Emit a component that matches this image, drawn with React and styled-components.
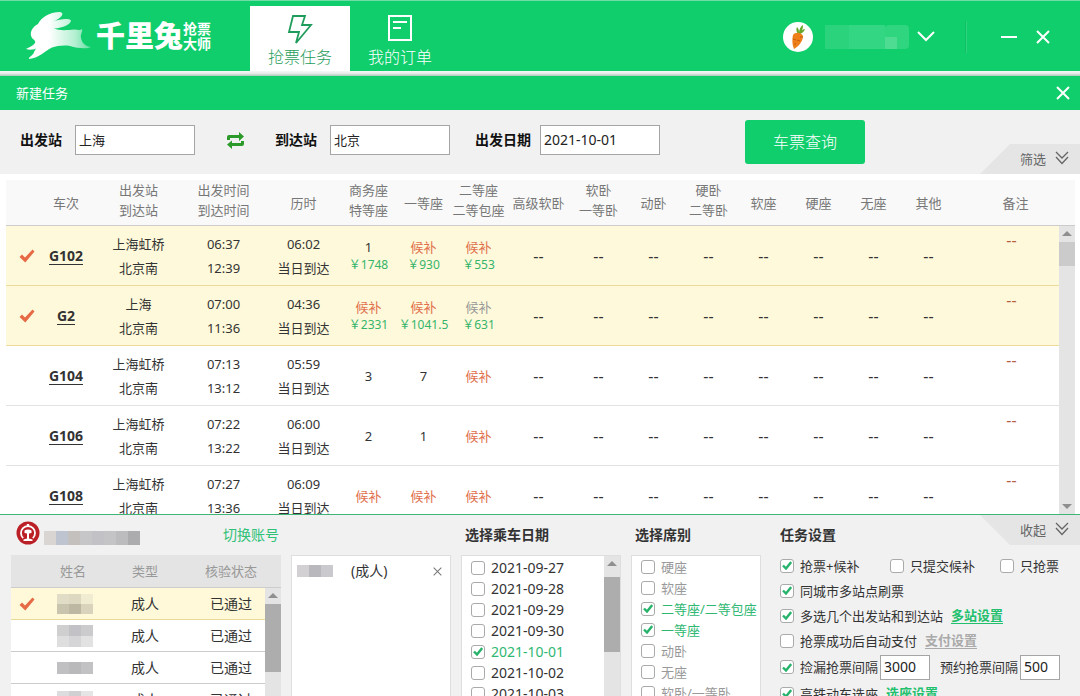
import React from 'react';
import styled, { createGlobalStyle } from 'styled-components';

const GlobalStyle = createGlobalStyle`
  * {
    box-sizing: border-box;
  }

  body {
    margin: 0;
    font-family: 'Noto Sans', 'Noto Sans CJK SC', sans-serif;
    font-size: 13px;
    line-height: 20px;
    color: #333;
    background: #fff;
  }

  button, input {
    font-family: inherit;
    font-size: inherit;
  }
`;

const Page = styled.div`
  height: 100vh;
  display: flex;
  flex-direction: column;
  overflow: hidden;
`;

const IconButton = styled.button`
  display: flex;
  align-items: center;
  justify-content: center;
  padding: 0;
  border: none;
  background: none;
  cursor: pointer;
`;

/* header */

const Header = styled.header`
  display: flex;
  justify-content: space-between;
  height: 71px;
  flex-shrink: 0;
  background: #10ce6c;
  border-top: 1px solid #6fdda5;
`;

const HeaderShadow = styled.div`
  height: 5px;
  flex-shrink: 0;
  background: linear-gradient(to bottom, #f4fbf7 0%, #e6eae8 50%, #a9c9b8 100%);
`;

const HeaderLeft = styled.div`
  display: flex;
`;

const Logo = styled.div`
  display: flex;
  align-items: center;
  width: 250px;
  padding-left: 24px;
  color: #fff;
`;

const LogoName = styled.span`
  margin-left: 4px;
  font-size: 29px;
  line-height: 40px;
  font-weight: 900;
`;

const LogoSub = styled.span`
  width: 28px;
  font-size: 14px;
  line-height: 15px;
  font-weight: 700;
`;

const Tabs = styled.nav`
  display: flex;
  padding-top: 5px;
`;

const Tab = styled.button`
  display: flex;
  flex-direction: column;
  align-items: center;
  width: 100px;
  padding: 7px 0 0;
  border: none;
  font-size: 16px;
  line-height: 24px;
  font-weight: 300;
  color: ${props => (props.$active ? '#1f9c5b' : '#fff')};
  background: ${props => (props.$active ? '#fff' : 'transparent')};
  cursor: pointer;
`;

const UserArea = styled.div`
  display: flex;
  align-items: center;
  padding: 2px 30px 0 0;
`;

const Divider = styled.i`
  width: 2px;
  height: 32px;
  margin: 0 34px 0 26px;
  background: #0fbf63;
  border-right: 1px solid #2ed580;
`;

const CloseButton = styled(IconButton)`
  margin-left: 19px;
`;

const TitleBar = styled.div`
  display: flex;
  align-items: center;
  justify-content: space-between;
  height: 34px;
  flex-shrink: 0;
  padding: 0 10px 0 16px;
  color: #fff;
  background: #10ce6c;
`;

/* search */

const SearchBar = styled.form`
  position: relative;
  display: flex;
  align-items: flex-start;
  height: 64px;
  flex-shrink: 0;
  padding: 10px 20px;
  background: #f1f1f1;
`;

const Field = styled.div`
  display: flex;
  align-items: center;
  margin: 5px 25px 0 0;
`;

const FieldLabel = styled.label`
  min-width: 55px;
  padding-right: 9px;
  font-size: 14px;
  font-weight: 700;
  color: #111;
`;

const TextInput = styled.input`
  width: ${props => props.$width}px;
  height: ${props => props.$height}px;
  padding: 0 3px 2px;
  border: 1px solid #a5a5a5;
  border-radius: 0;
  background: #fff;
  color: #222;
  font-size: ${props => props.$size || 13}px;
`;

const SwapButton = styled(IconButton)`
  height: 30px;
  margin: 5px 30px 0 6px;
`;

const SearchButton = styled.button`
  width: 120px;
  height: 44px;
  margin-left: 60px;
  padding: 0 0 2px;
  border: none;
  border-radius: 3px;
  color: #fff;
  background: #10ce6c;
  font-size: 16px;
  font-weight: 300;
  cursor: pointer;
`;

const CornerTab = styled.button`
  position: absolute;
  right: 0;
  ${props => (props.$top ? 'top: 0;' : 'bottom: 0;')}
  display: flex;
  align-items: center;
  justify-content: flex-end;
  gap: 9px;
  width: 100px;
  height: 30px;
  padding: 0 11px 2px 0;
  border: none;
  color: #666;
  background: #e5e5e5;
  clip-path: ${props => (props.$top
    ? 'polygon(0 0, 100% 0, 100% 100%, 30px 100%)'
    : 'polygon(30px 0, 100% 0, 100% 100%, 0 100%)')};
  cursor: pointer;
`;

/* ticket list */

const TicketArea = styled.section`
  flex: 1;
  min-height: 0;
  display: flex;
  flex-direction: column;
  padding: 6px 5px 0 6px;
`;

const ListBody = styled.div`
  flex: 1;
  min-height: 0;
  display: flex;
  align-items: stretch;
  overflow: hidden;
`;

const ListScroll = styled.div`
  flex: 1;
  min-width: 0;
  overflow: hidden;
`;

const Table = styled.table`
  width: 100%;
  table-layout: fixed;
  border-collapse: separate;
  border-spacing: 0;
  text-align: center;
`;

const HeadCell = styled.th`
  height: 46px;
  padding: 0 0 ${props => (props.$double ? 5 : 0)}px;
  font-weight: 400;
  color: #777;
  white-space: nowrap;
  background: #f9f9f9;
  border-bottom: 1px solid #ccc;
`;

const TicketRow = styled.tr`
  background: ${props => (props.$selected ? '#fef9da' : '#fff')};

  td {
    border-bottom: 1px solid ${props => (props.$selected ? '#ecdc9a' : '#e2e2e2')};
  }
`;

const Cell = styled.td`
  height: 60px;
  padding: 0;
  line-height: 24px;
  white-space: nowrap;
`;

const EmptyCell = styled(Cell)`
  font-size: 16px;
`;

const CheckCell = styled(Cell)`
  padding-left: 12px;
  line-height: 0;
`;

const RemarkCell = styled(EmptyCell)`
  padding: 2px 0 0 8px;
  vertical-align: top;
  color: #b5603f;
`;

const TrainLink = styled.a`
  display: inline-block;
  font-size: 14px;
  line-height: 17px;
  font-weight: 700;
  color: #333;
  text-decoration: none;
  border-bottom: 1px solid #333;
`;

const seatColors = { wait: '#e0704d', off: '#999', num: '#333' };

const Seat = styled.div`
  line-height: 18px;
  color: ${props => seatColors[props.$kind]};
`;

const Price = styled.div`
  font-size: 12px;
  line-height: 18px;
  color: #35b56c;
`;

/* scrollbar */

const Track = styled.div`
  display: flex;
  flex-direction: column;
  align-items: center;
  width: 16px;
  flex-shrink: 0;
  background: #e4e4e4;
`;

const Arrow = styled.i`
  width: 0;
  height: 0;
  margin: ${props => (props.$down ? 'auto 0 5px' : '5px 0 6px')};
  border: 5px solid transparent;
  border-top: ${props => (props.$down ? '5px solid #8f8f8f' : 'none')};
  border-bottom: ${props => (props.$down ? 'none' : '5px solid #8f8f8f')};
`;

const Thumb = styled.div`
  width: 100%;
  height: ${props => props.$height}px;
  margin-top: ${props => props.$offset || 0}px;
  background: ${props => props.$color || '#adadad'};
`;

/* bottom panel */

const Bottom = styled.section`
  position: relative;
  display: flex;
  gap: 10px;
  height: 182px;
  flex-shrink: 0;
  padding-left: 11px;
  overflow: hidden;
  background: #f1f1f1;
  border-top: 1px solid #3fb57a;
`;

const Column = styled.div`
  display: flex;
  flex-direction: column;
  width: ${props => props.$width}px;
  flex-shrink: 0;
`;

const ColumnTitle = styled.h2`
  display: flex;
  align-items: center;
  height: 40px;
  flex-shrink: 0;
  margin: 0;
  padding-left: ${props => props.$indent || 0}px;
  font-size: 14px;
  font-weight: 700;
  color: #333;
`;

const Account = styled.div`
  display: flex;
  align-items: center;
  justify-content: space-between;
  height: 40px;
  flex-shrink: 0;
  padding: 0 2px 0 5px;
`;

const AccountId = styled.div`
  display: flex;
  align-items: flex-end;
  gap: 4px;
  padding-bottom: 4px;
`;

const SwitchLink = styled.a`
  font-size: 14px;
  color: #2fc177;
  text-decoration: none;
`;

const PassengerHead = styled(HeadCell)`
  height: 33px;
  color: #999;
  background: #e4e4e4;
  padding-right: ${props => props.$right || 0}px;
`;

const PassengerCell = styled.td`
  height: 32px;
  padding: 0;
  padding-left: ${props => props.$left || 0}px;
  font-size: 14px;
  line-height: 0;
  white-space: nowrap;
`;

const PassengerRow = styled.tr`
  background: ${props => (props.$selected ? '#fff9d9' : '#fff')};

  td {
    border-bottom: 1px solid ${props => (props.$selected ? '#e9da98' : '#ccc')};
  }
`;

const Panel = styled.div`
  flex: 1;
  display: flex;
  min-height: 0;
  overflow: hidden;
  background: #fff;
  border: 1px solid #dedede;
  border-bottom: none;
`;

const Chosen = styled.div`
  flex: 1;
  display: flex;
  align-items: center;
  height: 30px;
  padding: 0 8px 0 5px;
  font-size: 14px;
`;

const ChosenType = styled.span`
  margin: 0 auto 0 18px;
`;

const OptionList = styled.div`
  flex: 1;
  padding: ${props => props.$top || 0}px 0 0 9px;
`;

const Option = styled.label`
  display: flex;
  align-items: center;
  gap: 6px;
  height: ${props => props.$height}px;
  white-space: nowrap;
  font-size: ${props => props.$size || 13}px;
  color: ${props => props.$color || '#333'};
`;

const CheckBox = styled.input`
  appearance: none;
  width: 14px;
  height: 14px;
  flex-shrink: 0;
  margin: 0;
  border: 1px solid #aaa;
  border-radius: 3px;
  background: #fff center / 10px 9px no-repeat;

  &:checked {
    background-image: url("data:image/svg+xml,%3Csvg xmlns='http://www.w3.org/2000/svg' viewBox='0 0 10 9'%3E%3Cpath d='M1 4.5 4 7.5 9.2 1' fill='none' stroke='%2327b36b' stroke-width='2.4'/%3E%3C/svg%3E");
  }
`;

const Settings = styled.div`
  flex: 1;
  min-width: 0;
  padding-left: 9px;
`;

const ModeRow = styled.div`
  display: grid;
  grid-template-columns: 110px 110px 1fr;
`;

const SettingRow = styled.div`
  display: flex;
  align-items: center;
  gap: 8px;
`;

const IntervalRow = styled(SettingRow)`
  height: 28px;
  gap: 2px;
`;

const IntervalLabel = styled.label`
  margin-left: 8px;
`;

const SettingLink = styled.a`
  font-weight: 700;
  line-height: 16px;
  color: ${props => (props.$muted ? '#aaa' : '#22c06d')};
  text-decoration: none;
  border-bottom: 1px solid;
`;

const SettingBody = styled.div`
  margin-top: -2px;
`;

const Rabbit = () => (
  <svg width="68" height="50" viewBox="24 11 68 50" aria-hidden="true">
    <defs>
      <linearGradient id="fur" x1="0" y1="0" x2="1" y2="0">
        <stop offset="0.35" stopColor="#fff" />
        <stop offset="0.75" stopColor="#b5f0d2" />
        <stop offset="1" stopColor="#5fdf9e" />
      </linearGradient>
    </defs>
    <path
      fill="url(#fur)"
      d="M32 38 C29 33 32 27 38 24 C41 18 49 12 60 12 C65 13 62 18 53 21.500 C60 19 69 18 71 20.500
        C71 24 63 28 54 28.500 C60 31 68 30 74 29.500 C77 29.500 80 31 82 29 C83 32 80 34 81 38
        C82 43 85 46 91 47 C87 49 78 48.500 70 46 C63 45 57 46 52 47.500 C44 51 40 58 29 59
        C28 57 34 55 34 52 L36 48.500 C33 50 29 50 26 49 C29 47 33 46 35 43 C36 41 34 40 32 38 Z"
    />
  </svg>
);

const Carrot = () => (
  <svg width="30" height="30" viewBox="0 0 30 30" aria-hidden="true">
    <circle cx="15" cy="15" r="15" fill="#fff" />
    <path d="M15 12 C13 9 13 7 14 5 C16 7 16 9 16 11 C16 7 18 4 20 3 C20 7 19 9 17 11 C19 8 20 7 22 7 C21 10 19 11 17 12 Z" fill="#63a82b" />
    <path d="M10 13 C12 10 18 10 20 14 C20 19 16 24 11 27 C9 23 9 17 10 13 Z" fill="#ef7f1a" />
    <path d="M10 17 L13 18 M17 19 L14 18 M11 22 L13 22 M20 15 L17 15" stroke="#c65e0c" strokeWidth="1" />
  </svg>
);

const Cross = ({ size = 14, color = '#fff', width = 2 }) => (
  <svg width={size} height={size} viewBox="0 0 14 14" aria-hidden="true">
    <path d="M1 1 L13 13 M13 1 L1 13" stroke={color} strokeWidth={width} />
  </svg>
);

const Tick = () => (
  <svg width="16" height="14" viewBox="0 0 16 14" aria-hidden="true">
    <path d="M0.5 8 L3 5.5 L6 8.5 L13.5 0.5 L15.5 2.5 L6.3 13.5 Z" fill="#e56a45" />
  </svg>
);

const DoubleChevron = () => (
  <svg width="14" height="14" viewBox="0 0 14 14" fill="none" stroke="#666" strokeWidth="1.3" aria-hidden="true">
    <path d="M1 1 L7 7 L13 1 M1 6 L7 12.5 L13 6" />
  </svg>
);

const Railway = () => (
  <svg width="24" height="24" viewBox="0 0 24 24" aria-hidden="true">
    <circle cx="12" cy="12" r="11.5" fill="#bb2026" />
    <path d="M7.2 17.200 A7 7 0 1 1 16.8 17.200" fill="none" stroke="#fff" strokeWidth="1.8" />
    <path d="M12 3 V5.500" stroke="#fff" strokeWidth="2.4" />
    <path d="M8.5 9.5 Q12 7.500 15.5 9.5 V12 L13 12.600 V17.500 L16.5 18.600 V20 H7.5 V18.600 L11 17.500 V12.600 L8.5 12 Z" fill="#fff" />
  </svg>
);

// blurred-out names: rows of flat blocks
const Mosaic = ({ rows, block = 12, height = 18 }) => {
  const rowHeight = height / rows.length;

  return (
    <svg width={rows[0].length * block} height={height} aria-hidden="true">
      {rows.map((colors, y) => colors.map((color, x) => (
        <rect key={`${x}-${y}`} x={x * block} y={y * rowHeight} width={block} height={rowHeight} fill={color} />
      )))}
    </svg>
  );
};

const Scrollbar = ({ height, offset, color, down }) => (
  <Track>
    <Arrow />
    <Thumb $height={height} $offset={offset} $color={color} />
    {down && <Arrow $down />}
  </Track>
);

const ticketHeads = [
  [''], ['车次'], ['出发站', '到达站'], ['出发时间', '到达时间'], ['历时'],
  ['商务座', '特等座'], ['一等座'], ['二等座', '二等包座'], ['高级软卧'],
  ['软卧', '一等卧'], ['动卧'], ['硬卧', '二等卧'], ['软座'], ['硬座'],
  ['无座'], ['其他'], ['备注'],
];

const ticketWidths = [30, 60, 85, 85, 75, 55, 55, 55, 65, 55, 55, 55, 55, 55, 55, 55];

const wait = price => ({ kind: 'wait', text: '候补', price });

const tickets = [
  {
    no: 'G102', selected: true, from: '上海虹桥', to: '北京南', start: '06:37', end: '12:39', cost: '06:02',
    seats: [{ kind: 'num', text: '1', price: '1748' }, wait('930'), wait('553')],
  },
  {
    no: 'G2', selected: true, from: '上海', to: '北京南', start: '07:00', end: '11:36', cost: '04:36',
    seats: [wait('2331'), wait('1041.5'), { kind: 'off', text: '候补', price: '631' }],
  },
  {
    no: 'G104', from: '上海虹桥', to: '北京南', start: '07:13', end: '13:12', cost: '05:59',
    seats: [{ kind: 'num', text: '3' }, { kind: 'num', text: '7' }, wait()],
  },
  {
    no: 'G106', from: '上海虹桥', to: '北京南', start: '07:22', end: '13:22', cost: '06:00',
    seats: [{ kind: 'num', text: '2' }, { kind: 'num', text: '1' }, wait()],
  },
  {
    no: 'G108', from: '上海虹桥', to: '北京南', start: '07:27', end: '13:36', cost: '06:09',
    seats: [wait(), wait(), wait()],
  },
];

const passengers = [
  { selected: true, height: 20, rows: [['#e0dcc6', '#ddd9c0', '#f0ecd2'], ['#c9c4ad', '#bdb8a2', '#d8d3ba']] },
  { height: 22, rows: [['#cfcfcf', '#c2c2c6', '#cbcbce'], ['#dedede', '#d5d5d8', '#e2e2e2']] },
  { height: 12, rows: [['#c0c0c3', '#b9b9bc', '#c2c2c5']] },
  { height: 18, rows: [['#dcdcde', '#d0d0d3', '#e5e5e5'], ['#c9c9cb', '#c2c2c5', '#d0d0d0']] },
];

const accountMosaic = [['#d8d5d3', '#bfc5d0', '#c3c0be', '#c6c6c9', '#c2c2c6', '#c4c4c6', '#bcbcbf', '#acacaf']];

const dates = ['2021-09-27', '2021-09-28', '2021-09-29', '2021-09-30', '2021-10-01', '2021-10-02', '2021-10-03'];

const seatTypes = ['硬座', '软座', '二等座/二等包座', '一等座', '动卧', '无座', '软卧/一等卧'];

const chosenSeats = ['二等座/二等包座', '一等座'];

const Columns = ({ widths }) => (
  <colgroup>
    {widths.map((w, i) => <col key={i} style={{ width: w }} />)}
    <col />
  </colgroup>
);

const Check = ({ label, checked, ...rest }) => (
  <Option {...rest}>
    <CheckBox type="checkbox" defaultChecked={checked} />
    {label}
  </Option>
);

const TicketTable = () => (
  <TicketArea>
    <Table>
      <Columns widths={ticketWidths} />
      <thead>
        <tr>
          {ticketHeads.map((lines, i) => (
            <HeadCell key={i} $double={lines.length > 1}>
              {lines.map(line => <div key={line}>{line}</div>)}
            </HeadCell>
          ))}
        </tr>
      </thead>
    </Table>
    <ListBody>
      <ListScroll>
        <Table>
          <Columns widths={ticketWidths} />
          <tbody>
            {tickets.map(t => (
              <TicketRow key={t.no} $selected={t.selected}>
                <CheckCell>{t.selected && <Tick />}</CheckCell>
                <Cell><TrainLink href="#">{t.no}</TrainLink></Cell>
                <Cell>{t.from}<br />{t.to}</Cell>
                <Cell>{t.start}<br />{t.end}</Cell>
                <Cell>{t.cost}<br />当日到达</Cell>
                {t.seats.map((seat, i) => (
                  <Cell key={i}>
                    <Seat $kind={seat.kind}>{seat.text}</Seat>
                    {seat.price && <Price>￥{seat.price}</Price>}
                  </Cell>
                ))}
                {ticketHeads.slice(8, 16).map(([name]) => <EmptyCell key={name}>--</EmptyCell>)}
                <RemarkCell>--</RemarkCell>
              </TicketRow>
            ))}
          </tbody>
        </Table>
      </ListScroll>
      <Scrollbar height={24} color="#cbcbcb" down />
    </ListBody>
  </TicketArea>
);

const PassengerColumn = () => (
  <Column $width={270}>
    <Account>
      <AccountId>
        <Railway />
        <Mosaic height={14} rows={accountMosaic} />
      </AccountId>
      <SwitchLink href="#">切换账号</SwitchLink>
    </Account>
    <Table>
      <Columns widths={[32, 60, 84]} />
      <thead>
        <tr>
          <PassengerHead />
          <PassengerHead>姓名</PassengerHead>
          <PassengerHead>类型</PassengerHead>
          <PassengerHead $right={6}>核验状态</PassengerHead>
        </tr>
      </thead>
    </Table>
    <ListBody>
      <ListScroll>
        <Table>
          <Columns widths={[32, 60, 84]} />
          <tbody>
            {passengers.map((p, i) => (
              <PassengerRow key={i} $selected={p.selected}>
                <PassengerCell>{p.selected && <Tick />}</PassengerCell>
                <PassengerCell $left={4}><Mosaic rows={p.rows} height={p.height} /></PassengerCell>
                <PassengerCell>成人</PassengerCell>
                <PassengerCell $left={10}>已通过</PassengerCell>
              </PassengerRow>
            ))}
          </tbody>
        </Table>
      </ListScroll>
      <Scrollbar height={68} />
    </ListBody>
  </Column>
);

const TaskSettings = () => (
  <Settings>
    <ColumnTitle>任务设置</ColumnTitle>
    <SettingBody>
      <ModeRow>
        <Check $height={25} label="抢票+候补" checked />
        <Check $height={25} label="只提交候补" />
        <Check $height={25} label="只抢票" />
      </ModeRow>
      <Check $height={25} label="同城市多站点刷票" checked />
      <SettingRow>
        <Check $height={25} label="多选几个出发站和到达站" checked />
        <SettingLink href="#">多站设置</SettingLink>
      </SettingRow>
      <SettingRow>
        <Check $height={25} label="抢票成功后自动支付" />
        <SettingLink href="#" $muted>支付设置</SettingLink>
      </SettingRow>
      <IntervalRow>
        <Check $height={25} label="捡漏抢票间隔" checked />
        <TextInput aria-label="捡漏抢票间隔" $width={50} $height={25} $size={14} defaultValue="3000" />
        <IntervalLabel htmlFor="reserve">预约抢票间隔</IntervalLabel>
        <TextInput id="reserve" $width={40} $height={25} $size={14} defaultValue="500" />
      </IntervalRow>
      <SettingRow>
        <Check $height={25} label="高铁动车选座" checked />
        <SettingLink href="#">选座设置</SettingLink>
      </SettingRow>
    </SettingBody>
  </Settings>
);

const App = () => (
  <Page>
    <GlobalStyle />
    <Header>
      <HeaderLeft>
        <Logo>
          <Rabbit />
          <LogoName>千里兔</LogoName>
          <LogoSub>抢票大师</LogoSub>
        </Logo>
        <Tabs>
          <Tab $active>
            <svg width="26" height="32" viewBox="0 0 26 32" fill="none" stroke="currentColor" strokeWidth="1.8">
              <path d="M6 3 H18 L15 12 H24 L9 30 L12 19 H2 Z" />
            </svg>
            抢票任务
          </Tab>
          <Tab>
            <svg width="26" height="32" viewBox="0 0 26 32" fill="none" stroke="currentColor" strokeWidth="2">
              <path d="M2 3 H24 V27 H2 Z M6 9 H20 M6 15 H14" />
            </svg>
            我的订单
          </Tab>
        </Tabs>
      </HeaderLeft>
      <UserArea>
        <Carrot />
        <IconButton aria-label="账号">
          <svg width="126" height="24" viewBox="0 0 126 24" aria-hidden="true">
            <rect x="12" width="24" height="24" fill="#2bd47c" />
            <rect x="36" width="36" height="24" fill="#33d682" />
            <rect x="72" width="24" height="24" rx="4" fill="#30d580" />
            <rect x="72" y="12" width="12" height="12" fill="#4ddc92" />
            <path d="M105 7 L113 15 L121 7" fill="none" stroke="#fff" strokeWidth="2" />
          </svg>
        </IconButton>
        <Divider />
        <IconButton aria-label="最小化">
          <svg width="16" height="14" viewBox="0 0 16 14"><path d="M0 7 H16" stroke="#fff" strokeWidth="2" /></svg>
        </IconButton>
        <CloseButton aria-label="关闭"><Cross /></CloseButton>
      </UserArea>
    </Header>
    <HeaderShadow />
    <TitleBar>
      新建任务
      <IconButton aria-label="关闭任务"><Cross /></IconButton>
    </TitleBar>
    <SearchBar>
      <Field>
        <FieldLabel htmlFor="from">出发站</FieldLabel>
        <TextInput id="from" $width={120} $height={30} defaultValue="上海" />
      </Field>
      <SwapButton type="button" aria-label="交换">
        <svg width="19" height="17" viewBox="0 0 19 17" fill="#2c9a28">
          <path d="M1 8 V5 Q1 3 3 3 H13 V0 L18 4.500 L13 9 V6 H4 V8 Z" />
          <path d="M18 9 V12 Q18 14 16 14 H6 V17 L1 12.500 L6 8.500 V11 H15 V9 Z" />
        </svg>
      </SwapButton>
      <Field>
        <FieldLabel htmlFor="to">到达站</FieldLabel>
        <TextInput id="to" $width={120} $height={30} defaultValue="北京" />
      </Field>
      <Field>
        <FieldLabel htmlFor="date">出发日期</FieldLabel>
        <TextInput id="date" $width={120} $height={30} $size={14} defaultValue="2021-10-01" />
      </Field>
      <SearchButton type="button">车票查询</SearchButton>
      <CornerTab type="button">筛选<DoubleChevron /></CornerTab>
    </SearchBar>
    <TicketTable />
    <Bottom>
      <PassengerColumn />
      <Column $width={160}>
        <ColumnTitle as="div" />
        <Panel>
          <Chosen>
            <Mosaic rows={[['#d3d0d3', '#b9b9bd', '#c9c9ce']]} height={12} />
            <ChosenType>(成人)</ChosenType>
            <IconButton aria-label="移除"><Cross size={9} color="#777" width={1.6} /></IconButton>
          </Chosen>
        </Panel>
      </Column>
      <Column $width={160}>
        <ColumnTitle $indent={4}>选择乘车日期</ColumnTitle>
        <Panel>
          <OptionList $top={1}>
            {dates.map(d => (
              <Check
                key={d}
                $height={21}
                $size={14}
                label={d}
                checked={d === '2021-10-01'}
                $color={d === '2021-10-01' ? '#2fb873' : '#333'}
              />
            ))}
          </OptionList>
          <Scrollbar height={75} offset={5} />
        </Panel>
      </Column>
      <Column $width={130}>
        <ColumnTitle $indent={4}>选择席别</ColumnTitle>
        <Panel>
          <OptionList>
            {seatTypes.map(s => (
              <Check
                key={s}
                $height={21}
                label={s}
                checked={chosenSeats.includes(s)}
                $color={chosenSeats.includes(s) ? '#2fb873' : '#999'}
              />
            ))}
          </OptionList>
        </Panel>
      </Column>
      <TaskSettings />
      <CornerTab $top type="button">收起<DoubleChevron /></CornerTab>
    </Bottom>
  </Page>
);

export default App;
